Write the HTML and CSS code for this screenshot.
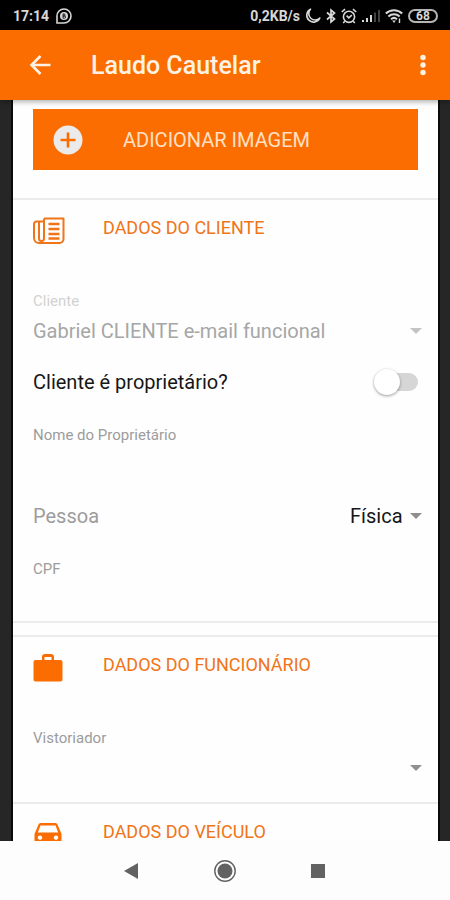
FILE: index.html
```html
<!DOCTYPE html>
<html lang="pt-BR">
<head>
<meta charset="utf-8">
<meta name="viewport" content="width=device-width, initial-scale=1">
<title>Laudo Cautelar</title>
<link rel="stylesheet" href="styles.css">
</head>
<body>
<div class="status">
  <span class="clock">17:14</span>
  <svg class="status-chat" width="16" height="16" viewBox="0 0 16 16" fill="none" stroke="currentColor" stroke-width="1.6">
    <path d="M1 15V8a7 7 0 1 1 7 7z"/>
    <circle cx="8" cy="8" r="4" fill="currentColor" stroke="none"/>
    <path d="M7 5.800v4.400M7 6h1.200a1 1 0 0 1 0 2H7h1.500a1.100 1.100 0 0 1 0 2.200H7" stroke="#000" stroke-width=".8"/>
  </svg>
  <div class="status-right">
    <span class="rate">0,2KB/s</span>
    <svg width="16" height="16" viewBox="0 0 16 16" fill="none" stroke="currentColor" stroke-width="1.6" stroke-linejoin="round"><path d="M5.500 1.200A6.800 6.800 0 1 0 14.800 10 6.400 6.400 0 0 1 5.500 1.200z"/></svg>
    <svg width="10" height="16" viewBox="0 0 10 16" fill="none" stroke="currentColor" stroke-width="1.700"><path d="M1 4.500l7.500 6.500L5 14V2l3.500 3L1 11.500"/></svg>
    <svg width="16" height="16" viewBox="0 0 16 16" fill="none" stroke="currentColor" stroke-width="1.600"><circle cx="8" cy="8.800" r="5.600"/><path d="M.8 4L4 1.200M15.200 4L12 1.200M3.800 13.200l-1.600 1.800M12.200 13.200l1.600 1.800M5.600 7.600l2.200 2.200 3-2.600"/></svg>
    <svg width="18" height="14" viewBox="0 0 18 14" fill="currentColor"><path d="M0 11h2v2H0zM4 9h2v4H4zM8 6h2v7H8z"/><path d="M12 3.500h2V13h-2zM16 1h2v12h-2z" opacity=".3"/></svg>
    <svg width="18" height="16" viewBox="0 0 18 16" fill="none" stroke="currentColor" stroke-width="2"><path d="M.8 5.400a12 12 0 0 1 16.400 0M3.400 8.400a8.200 8.200 0 0 1 11.200 0M6 11.200a4.600 4.600 0 0 1 6 0"/><path d="M7.200 12.600h3.600L9 15z" fill="currentColor" stroke="none"/><path d="M14.500 10.500v4.500" stroke-width="1.400"/></svg>
    <span class="battery">68</span>
  </div>
</div>

<header class="appbar">
  <button class="icon-button" aria-label="Voltar">
    <svg width="22" height="22" viewBox="0 0 22 22" fill="none" stroke="currentColor" stroke-width="2.600"><path d="M21.500 11H3M11.500 2L2.500 11l9 9"/></svg>
  </button>
  <h1>Laudo Cautelar</h1>
  <button class="icon-button menu-button" aria-label="Mais opções">
    <svg width="6" height="22" viewBox="0 0 6 22" fill="currentColor"><circle cx="3" cy="3.500" r="2.700"/><circle cx="3" cy="11" r="2.700"/><circle cx="3" cy="18.500" r="2.700"/></svg>
  </button>
</header>

<main class="stage">
  <form class="sheet">
    <div class="actions">
      <button class="add-button" type="button">
        <svg width="30" height="30" viewBox="0 0 30 30"><circle cx="15" cy="15" r="14.500" fill="#ebebeb"/><path d="M15 7.500v15M7.500 15h15" stroke="#fb6d00" stroke-width="2.600"/></svg>
        <span>ADICIONAR IMAGEM</span>
      </button>
    </div>

    <section class="section section-client">
      <h2>
        <svg width="32" height="28" viewBox="0 0 32 28" fill="none" stroke="currentColor" stroke-width="2" stroke-linejoin="round"><path d="M11 1.500h19.500V22a4 4 0 0 1-4 4H6a5 5 0 0 1-5-5V7a2.500 2.500 0 0 1 2.500-2.500H11"/><path d="M11 1.500V21.500a2.500 2.500 0 0 1-5 0V4.500" /><path d="M15.500 7H26.500M15.500 12H26.500M15.500 17H26.500M15.500 21.500H26.500" stroke-width="2.400"/></svg>
        <span>DADOS DO CLIENTE</span>
      </h2>
      <label class="label faded" for="cliente">Cliente</label>
      <div class="select-box faded-arrow">
        <select id="cliente" disabled><option>Gabriel CLIENTE e-mail funcional</option></select>
        <svg width="12" height="6" viewBox="0 0 12 6"><path d="M0 0h12L6 6z" fill="currentColor"/></svg>
      </div>
      <div class="row">
        <label for="dono">Cliente é proprietário?</label>
        <input class="switch" id="dono" type="checkbox" role="switch">
      </div>
      <label class="label" for="nome">Nome do Proprietário</label>
      <input class="text" id="nome" type="text">
      <div class="row">
        <label class="muted" for="pessoa">Pessoa</label>
        <div class="select-box">
          <select id="pessoa"><option>Física</option></select>
          <svg width="12" height="6" viewBox="0 0 12 6"><path d="M0 0h12L6 6z" fill="currentColor"/></svg>
        </div>
      </div>
      <label class="label" for="cpf">CPF</label>
      <input class="text" id="cpf" type="text" inputmode="numeric">
    </section>

    <section class="section">
      <h2>
        <svg width="30" height="28" viewBox="0 0 30 28" fill="#fb6d00"><path fill-rule="evenodd" d="M9 6V3a3 3 0 0 1 3-3h6a3 3 0 0 1 3 3v3h6.500A2 2 0 0 1 29.500 8v17.500a2 2 0 0 1-2 2h-25a2 2 0 0 1-2-2V8a2 2 0 0 1 2-2zM11.500 6h7V3h-7z"/></svg>
        <span>DADOS DO FUNCIONÁRIO</span>
      </h2>
      <label class="label" for="vistoriador">Vistoriador</label>
      <div class="select-box">
        <select id="vistoriador"><option></option></select>
        <svg width="12" height="6" viewBox="0 0 12 6"><path d="M0 0h12L6 6z" fill="currentColor"/></svg>
      </div>
    </section>

    <section class="section">
      <h2>
        <svg width="30" height="24" viewBox="0 0 30 24" fill="#fb6d00"><path fill-rule="evenodd" d="M5.500 1.500A2.500 2.500 0 0 1 8 0h14a2.500 2.500 0 0 1 2.500 1.500L28.500 11v11.500a1.500 1.500 0 0 1-1.500 1.500h-1.500a1.500 1.500 0 0 1-1.500-1.500V21H6v1.500A1.500 1.500 0 0 1 4.500 24H3a1.500 1.500 0 0 1-1.500-1.500V11zM7.500 2.500L4.800 9.500h20.400l-2.700-7zM7 12.500a2.200 2.200 0 1 0 .01 0zM23 12.500a2.200 2.200 0 1 0 .01 0z"/></svg>
        <span>DADOS DO VEÍCULO</span>
      </h2>
    </section>
  </form>
</main>

<nav class="navbar">
  <button aria-label="Voltar à tela anterior"><svg width="22" height="22" viewBox="0 0 22 22"><path d="M17 3v16L3 11z" fill="#626262"/></svg></button>
  <button aria-label="Início"><svg width="22" height="22" viewBox="0 0 22 22"><circle cx="11" cy="11" r="10.200" fill="none" stroke="#626262" stroke-width="1.400"/><circle cx="11" cy="11" r="7.500" fill="#626262"/></svg></button>
  <button aria-label="Recentes"><svg width="22" height="22" viewBox="0 0 22 22"><path d="M4 4h14v14H4z" fill="#626262"/></svg></button>
</nav>
</body>
</html>
```
FILE: styles.css
```css
* {
  box-sizing: border-box;
}

body {
  margin: 0;
  height: 100vh;
  display: flex;
  flex-direction: column;
  background: #fdfdfd;
  color: #161616;
  font-family: Roboto, "Liberation Sans", sans-serif;
  font-size: 20px;
}

button,
input,
select {
  margin: 0;
  padding: 0;
  border: 0;
  background: none;
  color: inherit;
  font: inherit;
}

svg {
  display: block;
  flex: none;
}

.status {
  flex: none;
  height: 30px;
  padding: 2px 12px 0 13px;
  display: flex;
  align-items: center;
  background: #000;
  color: #d8d8d8;
  font-size: 14px;
  font-weight: 700;
}

.status-chat {
  margin-left: 7px;
}

.status-right {
  margin-left: auto;
  display: flex;
  align-items: center;
  gap: 5px;
}

.battery {
  width: 30px;
  height: 14px;
  border: 2px solid #b5b5b5;
  border-radius: 7px;
  font-size: 12px;
  line-height: 10px;
  text-align: center;
}

.appbar {
  flex: none;
  height: 70px;
  padding: 0 16px 0 20px;
  display: flex;
  align-items: center;
  background: #fb6d00;
  color: #fff2e4;
  box-shadow: 0 2px 5px rgba(0, 0, 0, 0.3);
  z-index: 1;
}

.appbar h1 {
  margin: 0 auto 0 31px;
  font-size: 25px;
  font-weight: 500;
}

.icon-button {
  width: 40px;
  height: 40px;
  display: grid;
  place-items: center;
}

.menu-button {
  width: 22px;
}

.stage {
  flex: 1;
  min-height: 0;
  padding: 0 12px 0 13px;
  display: flex;
  background: #262626;
}

.sheet {
  flex: 1;
  overflow: hidden;
  background: #fefefe;
  outline: 2px solid #0a0a0a;
}

.actions {
  padding: 9px 20px 28px;
}

.add-button {
  width: 100%;
  height: 61px;
  padding: 0 20px;
  display: flex;
  align-items: center;
  gap: 40px;
  background: #fb6d00;
  color: #ffe0c4;
}

.section {
  padding: 0 20px 14px;
  border-top: 2px solid #ebebeb;
}

.section-client {
  margin-bottom: 12px;
  padding-bottom: 2px;
  border-bottom: 2px solid #ebebeb;
}

.section h2 {
  height: 58px;
  margin: 0 0 33px;
  padding-bottom: 2px;
  display: grid;
  grid-template-columns: 70px 1fr;
  align-items: center;
  color: #f07418;
  font-size: 18px;
  font-weight: 400;
  line-height: 18px;
}

.section h2 svg {
  margin-top: 5px;
}

.label {
  display: block;
  color: #9c9c9c;
  font-size: 15px;
  line-height: 20px;
}

.faded {
  color: #d2d2d2;
}

.muted {
  color: #9c9c9c;
}

.text {
  display: block;
  width: 100%;
  height: 40px;
}

.text:focus {
  outline: none;
}

.row {
  height: 62px;
  margin-bottom: 12px;
  display: flex;
  align-items: center;
  justify-content: space-between;
}

.select-box {
  height: 40px;
  margin-right: -4px;
  display: grid;
  align-items: center;
  color: #8f8f8f;
}

.select-box > * {
  grid-area: 1 / 1;
}

.select-box svg {
  justify-self: end;
  pointer-events: none;
}

.faded-arrow {
  color: #c4c4c4;
}

select {
  appearance: none;
  width: 100%;
  height: 40px;
  padding-right: 19px;
  color: #161616;
}

select:disabled {
  color: #a6a6a6;
  opacity: 1;
}

.switch {
  appearance: none;
  width: 44px;
  height: 18px;
  border-radius: 9px;
  background: linear-gradient(90deg, transparent 12px, #d6d6d6 12px);
  display: flex;
  align-items: center;
}

.switch::before {
  content: "";
  width: 26px;
  height: 26px;
  border-radius: 50%;
  background: #fff;
  box-shadow: 0 1px 3px rgba(0, 0, 0, 0.4);
}

.switch:checked {
  justify-content: flex-end;
  background: #fbb67f;
}

.navbar {
  flex: none;
  height: 59px;
  display: flex;
  justify-content: center;
  align-items: center;
  gap: 49px;
  background: #fdfdfd;
  z-index: 1;
}

.navbar button {
  width: 44px;
  height: 44px;
  display: grid;
  place-items: center;
}
```
